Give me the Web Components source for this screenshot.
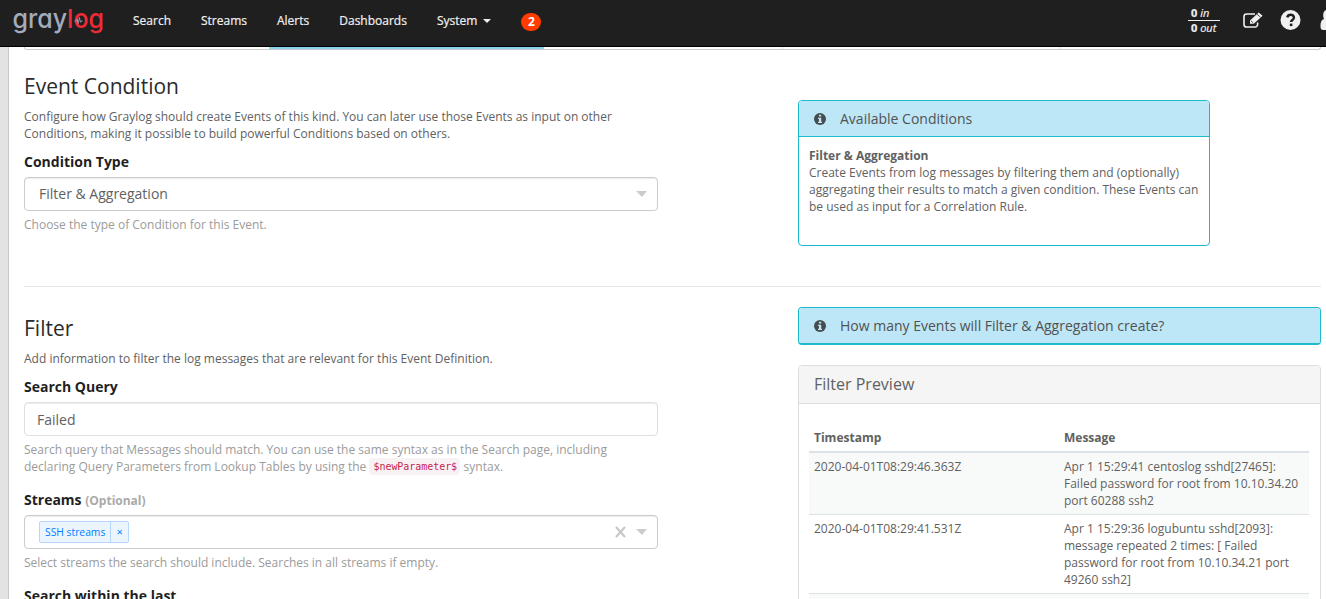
<!DOCTYPE html>
<html lang="en">
<head>
<meta charset="utf-8">
<title>Graylog</title>
<style>
html,body{margin:0;height:100%;overflow:hidden}
body{font:12px/17px "Open Sans","Noto Sans",sans-serif;color:#616161;background:#e3e3e3}
</style>
</head>
<body>
<gl-app></gl-app>
<script>
const define = (name, html) => {
  const t = document.createElement('template');
  t.innerHTML = html;
  customElements.define(name, class extends HTMLElement {
    constructor() {
      super();
      this.attachShadow({mode: 'open'}).appendChild(t.content.cloneNode(true));
    }
  });
};

define('gl-logo', `
<style>:host{display:block;width:92px;height:40px}svg{display:block}
text{font-family:Inter,"Open Sans",sans-serif;font-size:26px;font-weight:500;font-feature-settings:"cv11"}</style>
<svg width="92" height="40" viewBox="0 0 92 40">
<text x="-0.5" y="27.5" fill="#a4abbd" textLength="91.5" lengthAdjust="spacingAndGlyphs">gray<tspan fill="#ef2b37">log</tspan></text>
<path d="M61.5 21.2h1.5l1-2 1.2 4.3 1.2-6 1.1 4.8 .9-1.4h1.3" fill="none" stroke="#a4abbd" stroke-width=".8"/>
</svg>`);

define('gl-nav-item', `
<style>:host{display:block;padding:0 15px;line-height:20px;color:#f0f0f0;white-space:nowrap;-webkit-text-stroke:.2px #f0f0f0}</style><slot></slot>`);

define('gl-throughput', `
<style>:host{display:block;width:32px;font-size:11px;line-height:14px;color:#f0f0f0;font-style:italic;white-space:nowrap;-webkit-text-stroke:.2px #f0f0f0}
div{height:14px;padding-left:3px}b{font-style:normal}div+div{border-top:1px solid #f0f0f0}</style>
<div><b>0</b> in</div><div><b>0</b> out</div>`);

define('gl-navbar', `
<style>
:host{display:flex;box-sizing:border-box;height:47px;background:#1f1f1f;border-bottom:1px solid #000;overflow:hidden;flex:none}
gl-logo{margin-left:13px}
nav{display:flex;padding:11px 0 0 13px}
.caret{display:inline-block;border:4px solid transparent;border-top-color:#f0f0f0;border-bottom:0;margin-left:6px;vertical-align:2px}
.badge{margin:2px 0 0 15px;width:20px;height:18px;border-radius:9px;background:#ff3b00;color:#fff;font-weight:700;line-height:17px;text-align:center}
.right{margin-left:auto;display:flex;flex:none;padding-top:6px}
.right svg{display:block;flex:none}
</style>
<gl-logo></gl-logo>
<nav><gl-nav-item>Search</gl-nav-item><gl-nav-item>Streams</gl-nav-item><gl-nav-item>Alerts</gl-nav-item><gl-nav-item>Dashboards</gl-nav-item><gl-nav-item>System<span class="caret"></span></gl-nav-item><div class="badge">2</div></nav>
<div class="right"><gl-throughput></gl-throughput>
<svg width="20" height="18" viewBox="0 0 20 18" style="margin:6px 0 0 23px" fill="none" stroke="#f0f0f0"><path d="M12 2H3.6A2.6 2.6 0 0 0 1 4.6V12.4a2.6 2.6 0 0 0 2.6 2.6H12A2.6 2.6 0 0 0 14.6 12.4v-2" stroke-width="1.6"/><path d="M7 8.4L15.7.4l3.9 3.4-8.8 8H7z" fill="#f0f0f0" stroke="none"/><path d="M14 2.2l3.4 3M8 8.9l2.2 2" stroke="#1f1f1f" stroke-width=".8"/></svg>
<svg width="21" height="21" viewBox="0 0 21 21" style="margin:4px 0 0 17px"><circle cx="10.5" cy="10" r="10" fill="#f0f0f0"/><path d="M7.2 7.4C7.8 5.5 9 4.8 10.7 4.8c3.1 0 4.2 3 2.4 4.6-1.2 1-2 1.2-2 2.6" fill="none" stroke="#1f1f1f" stroke-width="2.5"/><path d="M9.8 13.6h2.6v2.5H9.8z" fill="#1f1f1f"/></svg>
<svg width="6" height="22" viewBox="0 0 6 22" style="margin:4px 0 0 19px"><path d="M6 0C3.7 1 3.2 3 3.2 5.3c0 1.6.3 2.7.9 3.6C1.5 9.5.5 12 .5 16c0 3 .8 4 3 4H6z" fill="#f0f0f0"/></svg>
</div>`);

define('gl-steps', `
<style>:host{display:flex;height:3px;box-sizing:border-box;border:1px solid #ccc;border-top:0;border-radius:0 0 4px 4px}
i{flex:1;box-sizing:border-box}.line{border-right:1px solid #ddd}
.on{background:#8ad3ea;height:2px;flex:0 0 275px}.first{flex:0 0 244px}</style>
<i class="first"></i><i class="on"></i><i class="line" style="flex:0 0 239px"></i><i class="line" style="flex:0 0 277px"></i><i></i>`);

define('gl-title', `
<style>:host{display:block;font-size:21px;line-height:24px;height:24px;color:#2b2b2b;margin-bottom:10px;white-space:nowrap}</style><slot></slot>`);

define('gl-text', `
<style>:host{display:block;margin-bottom:10px;white-space:nowrap}</style><slot></slot>`);

define('gl-caret', `
<style>:host{display:block;width:0;height:0;border:5.5px solid transparent;border-left-width:6px;border-top:6px solid #ccc;border-bottom:0}</style>`);

define('gl-field', `
<style>
:host{display:block;margin-bottom:15px}
.label{font-size:14px;font-weight:700;line-height:20px;height:20px;color:#1f1f1f;white-space:nowrap}
.control{display:flex;align-items:center;box-sizing:border-box;height:34px;margin:5px 0;padding:0 10px 0 14px;border:1px solid var(--line,#ccc);border-radius:4px;background:#fff;box-shadow:inset 0 1px 1px rgba(0,0,0,.075);font-size:14px;line-height:20px;color:#616161}
.help{color:#9b9b9b;white-space:nowrap}
.end{margin-left:auto;display:flex;align-items:center;gap:10px}
</style>
<div class="label"><slot name="label"></slot></div>
<div class="control"><slot name="value"></slot><div class="end"><slot name="end"></slot></div></div>
<div class="help"><slot name="help"></slot></div>`);

define('gl-tag', `
<style>:host{display:flex;box-sizing:border-box;width:90px;height:22px;border:1px solid #b5d6fb;border-radius:2px;background:#ebf5ff;color:#007eff;font-size:10.3px;line-height:20px;white-space:nowrap}
span{padding:0 5px}span+span{border-left:1px solid #b5d6fb;flex:1;text-align:center;font-size:11px;padding:0}</style>
<span><slot></slot></span><span>×</span>`);

define('gl-code', `
<style>:host{display:inline-block;box-sizing:border-box;width:91px;height:17px;line-height:18px;vertical-align:top;padding:0 3px 0 4px;background:#f9f2f4;border-radius:4px;color:#c7254e;font-family:"DejaVu Sans Mono",monospace;font-size:10px;letter-spacing:-.05px}</style><slot></slot>`);

define('gl-info', `
<style>
:host{display:block;box-sizing:border-box;border:1px solid #1fb9cc;border-radius:4px;overflow:hidden;background:#fff}
.head{display:flex;align-items:center;height:35px;background:#bde6f6;border-bottom:1px solid #1fb9cc;padding-left:15px;font-size:14px;color:#525252;white-space:nowrap}
svg{margin-right:14px;flex:none}
.body{display:block;padding:0 10px;white-space:nowrap}
</style>
<div class="head"><svg width="12" height="12" viewBox="0 0 12 12"><circle cx="6" cy="6" r="6" fill="#474c4e"/><path d="M5 1.8h2.2v1.8H5zM4 4.8h3.2v4H8V10H4V8.8h1V6H4z" fill="#bde6f6"/></svg><slot name="title"></slot></div><div class="body"><slot></slot></div>`);

define('gl-panel', `
<style>:host{display:block;box-sizing:border-box;border:1px solid #ddd;border-radius:4px 4px 0 0;background:#fff;overflow:hidden}
.head{height:37px;line-height:37px;padding-left:15px;background:#f5f5f5;border-bottom:1px solid #ddd;font-size:16px}
.body{padding:25px 11px 0 10px}</style>
<div class="head"><slot name="title"></slot></div><div class="body"><slot></slot></div>`);

define('gl-row', `
<style>:host{display:grid;grid-template-columns:250px 1fr;border-top:1px solid #dce1e5;white-space:nowrap}
:host([head]){border:0;border-bottom:2px solid #dce1e5;font-weight:700;margin-bottom:-1px;height:22px}
:host([odd]){background:#f8fafa}:host([first]){border-top-color:transparent;background-clip:padding-box}
div{padding:5px}:host([head]) div{padding:0 5px}</style>
<div><slot name="time"></slot></div><div><slot></slot></div>`);

define('gl-section', `
<style>:host{display:grid;grid-template-columns:634px 523px;column-gap:140px}</style>
<div><slot></slot></div><div><slot name="side"></slot></div>`);

define('gl-app', `
<style>
:host{display:flex;flex-direction:column;height:599px;overflow:hidden}
main{flex:1;min-height:0;margin-left:8px;border-left:1px solid #c8c8c8;background:#fff;padding:0 5px 0 15px;overflow:hidden}
gl-section.one{padding-top:24px;height:212px}
gl-section.two{border-top:1px solid #e3e3e3;padding-top:29px}
.avail{width:412px;height:146px;margin-top:26px}
.many{height:38px;margin-top:-9px;border-bottom-width:2px}
.prev{margin-top:20px;height:260px}
.desc{padding-top:10px}
small{font-size:12px;color:#aaa}
.typed{margin:2px 0 0 -2px}
</style>
<gl-navbar></gl-navbar>
<main>
<gl-steps></gl-steps>
<gl-section class="one">
<gl-title>Event Condition</gl-title>
<gl-text>Configure how Graylog should create Events of this kind. You can later use those Events as input on other<br>Conditions, making it possible to build powerful Conditions based on others.</gl-text>
<gl-field><span slot="label">Condition Type</span><span slot="value">Filter &amp; Aggregation</span><gl-caret slot="end"></gl-caret><span slot="help">Choose the type of Condition for this Event.</span></gl-field>
<gl-info slot="side" class="avail"><span slot="title">Available Conditions</span><div class="desc"><b>Filter &amp; Aggregation</b><br>Create Events from log messages by filtering them and (optionally)<br>aggregating their results to match a given condition. These Events can<br>be used as input for a Correlation Rule.</div></gl-info>
</gl-section>
<gl-section class="two">
<gl-title>Filter</gl-title>
<gl-text>Add information to filter the log messages that are relevant for this Event Definition.</gl-text>
<gl-field style="--line:#dce1e5"><span slot="label">Search Query</span><span slot="value" class="typed">Failed</span><span slot="help">Search query that Messages should match. You can use the same syntax as in the Search page, including<br>declaring Query Parameters from Lookup Tables by using the <gl-code>$newParameter$</gl-code> syntax.</span></gl-field>
<gl-field><span slot="label">Streams <small>(Optional)</small></span><gl-tag slot="value">SSH streams</gl-tag><svg slot="end" width="11" height="12" viewBox="0 0 11 12"><path d="M1 1l9 10M10 1L1 11" stroke="#c8c8c8" stroke-width="2.2"/></svg><gl-caret slot="end"></gl-caret><span slot="help">Select streams the search should include. Searches in all streams if empty.</span></gl-field>
<gl-field><span slot="label">Search within the last</span></gl-field>
<gl-info slot="side" class="many"><span slot="title">How many Events will Filter &amp; Aggregation create?</span></gl-info>
<gl-panel slot="side" class="prev"><span slot="title">Filter Preview</span>
<gl-row head><span slot="time">Timestamp</span>Message</gl-row>
<gl-row odd first><span slot="time">2020-04-01T08:29:46.363Z</span>Apr 1 15:29:41 centoslog sshd[27465]:<br>Failed password for root from 10.10.34.20<br>port 60288 ssh2</gl-row>
<gl-row><span slot="time">2020-04-01T08:29:41.531Z</span>Apr 1 15:29:36 logubuntu sshd[2093]:<br>message repeated 2 times: [ Failed<br>password for root from 10.10.34.21 port<br>49260 ssh2]</gl-row>
<gl-row odd></gl-row>
</gl-panel>
</gl-section>
</main>`);
</script>
</body>
</html>
